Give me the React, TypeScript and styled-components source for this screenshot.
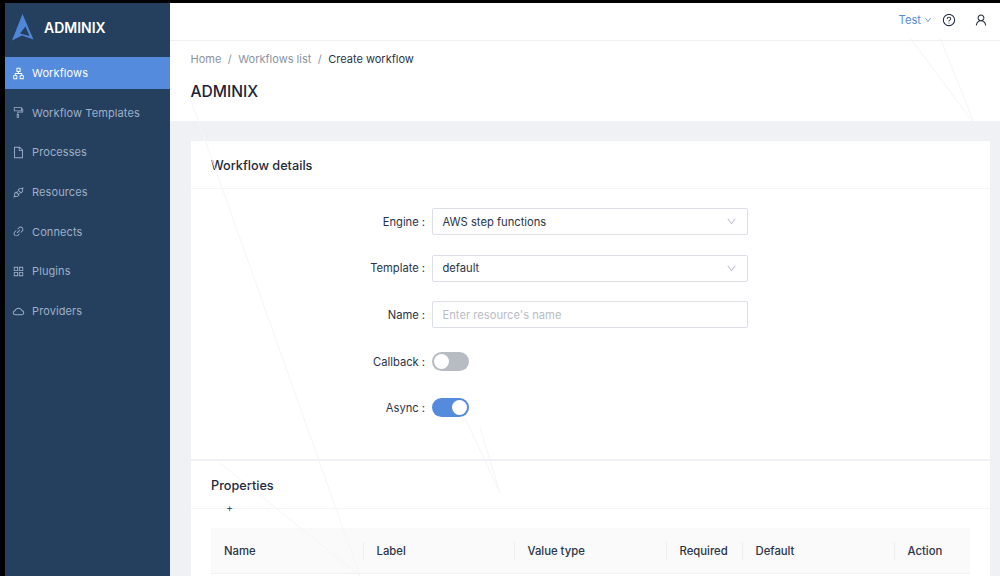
import React from "react"
import styled, { createGlobalStyle } from "styled-components"
import {
  AiOutlineApartment,
  AiOutlineFormatPainter,
  AiOutlineFile,
  AiOutlineApi,
  AiOutlineLink,
  AiOutlineAppstore,
  AiOutlineCloud,
  AiOutlineQuestionCircle,
  AiOutlineUser,
  AiOutlineDown,
} from "react-icons/ai"

const Global = createGlobalStyle`
  html, body { margin: 0; padding: 0; height: 100%; overflow: hidden; background: #000; }
  * { box-sizing: border-box; }
  #root { height: 100%; }
`

const Page = styled.div`
  width: 1000px;
  height: 576px;
  padding: 3px 0 0 5px;
  display: flex;
  background: #000;
  overflow: hidden;
  font-family: Inter, "Liberation Sans", sans-serif;
  font-size: 11.2px;
  color: #1f2a3c;
`

const Sidebar = styled.aside`
  width: 165px;
  flex: none;
  background: #253f5e;
`

const Brand = styled.div`
  height: 54px;
  display: flex;
  align-items: center;
  gap: 10px;
  padding: 0 0 5px 7px;
  color: #fff;
  font-size: 14px;
  font-weight: 600;
`

const Menu = styled.nav`
  display: flex;
  flex-direction: column;
  gap: 7.7px;
`

const MenuItem = styled.div<{ $active?: boolean }>`
  height: 32px;
  display: flex;
  align-items: center;
  gap: 7.5px;
  padding-left: 6.5px;
  font-size: 11px;
  letter-spacing: 0.1px;
  color: ${(p) => (p.$active ? "#fff" : "#9fb0c8")};
  background: ${(p) => (p.$active ? "#548bdc" : "transparent")};
  svg { width: 13px; height: 13px; flex: none; }
`

const Main = styled.main`
  flex: 1;
  min-width: 0;
  display: flex;
  flex-direction: column;
  background: #eff1f5;
  position: relative;
`

const Topbar = styled.header`
  height: 38px;
  flex: none;
  background: #fff;
  border-bottom: 1px solid #eef0f3;
  display: flex;
  align-items: center;
  justify-content: flex-end;
  padding: 0 12px 4px 0;
`

const UserMenu = styled.div`
  display: flex;
  align-items: center;
  gap: 3px;
  color: #548bdc;
  font-size: 11.2px;
  margin-right: 10px;
  svg { width: 8px; height: 8px; }
`

const TopIcon = styled.span<{ $gap?: number }>`
  display: flex;
  color: #1f2a3c;
  margin-right: ${(p) => p.$gap ?? 0}px;
  svg { width: 14px; height: 14px; }
`

const PageHead = styled.section`
  height: 80px;
  flex: none;
  background: #fff;
  padding: 11px 20.5px 0;
`

const Crumbs = styled.div`
  display: flex;
  gap: 6.5px;
  height: 14px;
  align-items: center;
  line-height: 14px;
  font-size: 11px;
  color: #8a93a3;
  span:last-child { color: #2a3547; }
`

const Title = styled.h1`
  margin: 16px 0 0;
  font-size: 15.6px;
  line-height: 20px;
  font-weight: 500;
  color: #1b2536;
`

const Card = styled.div`
  margin: 20px 10px 0 21px;
  background: #fff;
  flex: 1;
  min-height: 0;
  overflow: hidden;
`

const CardHead = styled.div`
  height: 48px;
  padding: 2px 20px 0;
  display: flex;
  align-items: center;
  font-size: 12.7px;
  font-weight: 500;
  color: #1f2a3c;
  border-bottom: 1px solid #f4f5f7;
`

const Form = styled.form`
  padding: 19px 0 0 0;
  height: 272px;
  display: flex;
  flex-direction: column;
  gap: 19.5px;
  border-bottom: 2px solid #f0f1f4;
`

const Row = styled.div`
  display: grid;
  grid-template-columns: 241px 316px;
  align-items: center;
  min-height: 27px;
`

const Label = styled.label`
  text-align: right;
  padding-right: 7px;
  color: #2a3547;
  &::after { content: ":"; margin-left: 3px; }
`

const Field = styled.div<{ $placeholder?: boolean }>`
  height: 27px;
  display: flex;
  align-items: center;
  justify-content: space-between;
  padding: 0 10px 0 9.5px;
  border: 1px solid #dcdfe6;
  border-radius: 2px;
  background: #fff;
  color: ${(p) => (p.$placeholder ? "#b9bdc6" : "#2a3547")};
  svg { width: 11px; height: 11px; color: #b9bdc6; }
`

const Track = styled.div<{ $on?: boolean }>`
  width: 37px;
  height: 19px;
  border-radius: 10px;
  padding: 2px;
  display: flex;
  justify-content: ${(p) => (p.$on ? "flex-end" : "flex-start")};
  background: ${(p) => (p.$on ? "#548bdc" : "#b7bbc2")};
`

const Knob = styled.div`
  width: 15px;
  height: 15px;
  border-radius: 50%;
  background: #fff;
`

const SwitchRow = styled(Row)`
  min-height: 19px;
  margin-top: 4.5px;
  margin-bottom: 3px;
`

const SectionHead = styled(CardHead)`
  margin-bottom: 19px;
`

const Table = styled.div`
  margin: 0 20px;
  height: 46px;
  background: #fafafa;
  border-bottom: 1px solid #f0f1f3;
  display: grid;
  grid-template-columns: 152px 151px 152px 76px 152px 76px;
  align-items: center;
  color: #2a3547;
`

const Th = styled.div`
  height: 18px;
  line-height: 18px;
  padding-left: 13px;
  font-size: 11.3px;
  font-weight: 500;
  & + & { border-left: 1px solid #eceef1; padding-left: 12.5px; }
`

const Cursor = styled.span`
  position: absolute;
  left: 56px;
  top: 499px;
  font-size: 11px;
  line-height: 12px;
  font-weight: 300;
  color: #2a3547;
`

// faint streaks lying over the content
const Streaks = styled.svg`
  position: absolute;
  left: 0;
  top: 0;
  pointer-events: none;
`

const Logo = () => (
  <svg width="22" height="27" viewBox="0 0 22 27" aria-hidden="true">
    <path
      fillRule="evenodd"
      d="M10.5 0 L21.5 25.5 L10 21.5 L0 26.5 Z M13.5 12.5 L17.5 22 L8 19.5 Z"
      fill="#4f86d8"
    />
  </svg>
)

const menu = [
  { label: "Workflows", icon: <AiOutlineApartment />, active: true },
  { label: "Workflow Templates", icon: <AiOutlineFormatPainter /> },
  { label: "Processes", icon: <AiOutlineFile /> },
  { label: "Resources", icon: <AiOutlineApi /> },
  { label: "Connects", icon: <AiOutlineLink /> },
  { label: "Plugins", icon: <AiOutlineAppstore /> },
  { label: "Providers", icon: <AiOutlineCloud /> },
]

const columns = ["Name", "Label", "Value type", "Required", "Default", "Action"]

export default function App() {
  return (
    <Page>
      <Global />
      <Sidebar>
        <Brand>
          <Logo />
          ADMINIX
        </Brand>
        <Menu>
          {menu.map((m) => (
            <MenuItem key={m.label} $active={m.active}>
              {m.icon}
              {m.label}
            </MenuItem>
          ))}
        </Menu>
      </Sidebar>
      <Main>
        <Topbar>
          <UserMenu>
            Test <AiOutlineDown />
          </UserMenu>
          <TopIcon $gap={18}>
            <AiOutlineQuestionCircle />
          </TopIcon>
          <TopIcon>
            <AiOutlineUser />
          </TopIcon>
        </Topbar>
        <PageHead>
          <Crumbs>
            <span>Home</span>
            <span>/</span>
            <span>Workflows list</span>
            <span>/</span>
            <span>Create workflow</span>
          </Crumbs>
          <Title>ADMINIX</Title>
        </PageHead>
        <Card>
          <CardHead>Workflow details</CardHead>
          <Form>
            <Row>
              <Label>Engine</Label>
              <Field>
                AWS step functions <AiOutlineDown />
              </Field>
            </Row>
            <Row>
              <Label>Template</Label>
              <Field>
                default <AiOutlineDown />
              </Field>
            </Row>
            <Row>
              <Label>Name</Label>
              <Field $placeholder>Enter resource's name</Field>
            </Row>
            <SwitchRow>
              <Label>Callback</Label>
              <Track>
                <Knob />
              </Track>
            </SwitchRow>
            <SwitchRow>
              <Label>Async</Label>
              <Track $on>
                <Knob />
              </Track>
            </SwitchRow>
          </Form>
          <SectionHead>Properties</SectionHead>
          <Table>
            {columns.map((c) => (
              <Th key={c}>{c}</Th>
            ))}
          </Table>
        </Card>
        <Streaks width="830" height="573" fill="none" stroke="#f4f5f7" strokeWidth="1">
          <path d="M20 95 L190 573" />
          <path d="M50 460 L190 573" />
          <path d="M295 415 L330 490 L310 425" />
          <path d="M740 35 L805 122 M770 35 L805 122" />
        </Streaks>
        <Cursor>+</Cursor>
      </Main>
    </Page>
  )
}
